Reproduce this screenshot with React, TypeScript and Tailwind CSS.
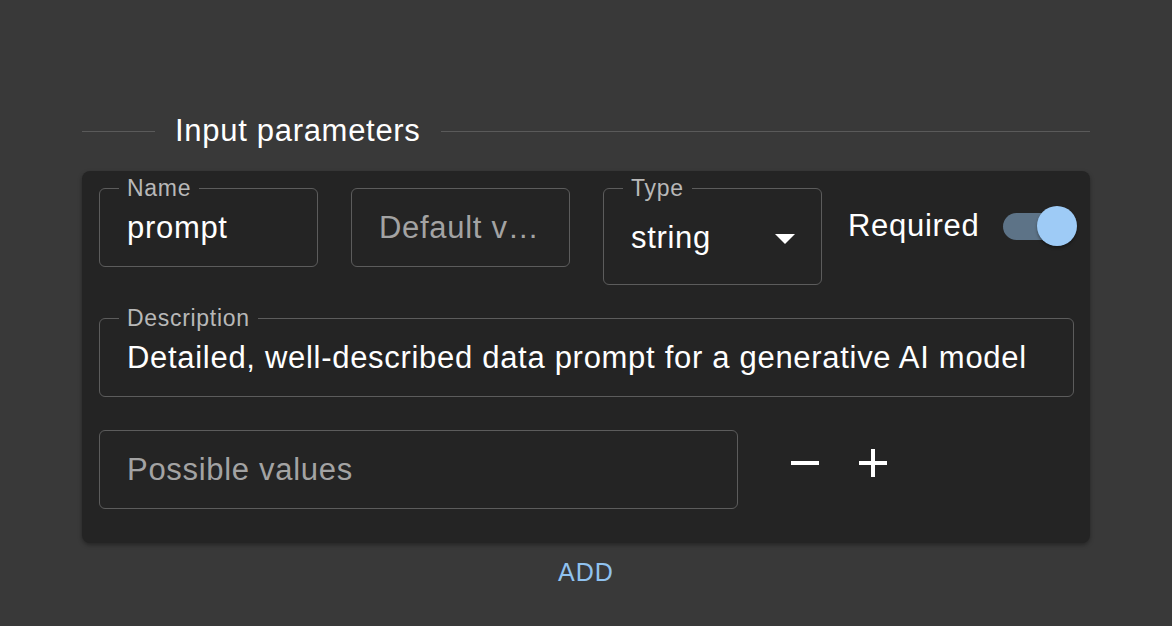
import React from 'react';

const FONT = { fontFamily: '"Liberation Sans", Arial, sans-serif' };

function OutlinedField({
  label,
  value,
  placeholder,
  className = '',
  children,
}: {
  label?: string;
  value?: string;
  placeholder?: string;
  className?: string;
  children?: React.ReactNode;
}) {
  return (
    <div
      className={`relative flex items-center rounded-[6px] border border-[#5c5c5c] pl-[27px] ${className}`}
    >
      {label && (
        <span className="absolute -top-[14px] left-[19px] bg-[#242424] px-[8px] text-[23px] leading-[26px] tracking-[0.7px] text-[#b8b8b8]">
          {label}
        </span>
      )}
      {value ? (
        <span className="whitespace-nowrap text-[31px] leading-[36px] tracking-[0.7px] text-white">{value}</span>
      ) : (
        <span className="whitespace-nowrap text-[31px] leading-[36px] tracking-[0.7px] text-[#a3a3a3]">{placeholder}</span>
      )}
      {children}
    </div>
  );
}

function Toggle() {
  return (
    <div className="relative -mr-[3px] flex h-[40px] w-[74px] items-center">
      <div className="h-[27px] w-[62px] rounded-full bg-[#5d7387]" />
      <div className="absolute right-0 top-0 h-[40px] w-[40px] rounded-full bg-[#9ecbf6] shadow-[0_2px_3px_rgba(0,0,0,0.35)]" />
    </div>
  );
}

export default function App() {
  return (
    <div className="min-h-screen w-full bg-[#393939] px-[82px] pt-[114px]" style={FONT}>
      {/* section heading */}
      <div className="flex h-[34px] items-center">
        <div className="h-px w-[73px] bg-[#5a5a5a]" />
        <span className="px-[20px] text-[31px] leading-[34px] tracking-[0.7px] text-white">Input parameters</span>
        <div className="h-px flex-1 bg-[#5a5a5a]" />
      </div>

      <div className="mt-[23px] rounded-[8px] bg-[#242424] pb-[34px] pl-[17px] pr-[16px] pt-[17px] shadow-[0_2px_4px_rgba(0,0,0,0.35)]">
        <div className="flex items-start">
          <OutlinedField label="Name" value="prompt" className="h-[79px] w-[219px] pr-[20px]" />
          <OutlinedField placeholder="Default v…" className="ml-[33px] h-[79px] w-[219px] pr-[20px]" />
          <OutlinedField label="Type" value="string" className="ml-[33px] h-[97px] w-[219px] justify-between pr-[20px] pt-[2px]">
            <svg width="48" height="48" viewBox="0 0 24 24" className="-mr-[8px] shrink-0 fill-white">
              <path d="M7 10l5 5 5-5z" />
            </svg>
          </OutlinedField>
          <div className="ml-[26px] flex h-[76px] flex-1 items-center justify-between">
            <span className="text-[31px] leading-[36px] tracking-[0.7px] text-white">Required</span>
            <Toggle />
          </div>
        </div>

        <OutlinedField
          label="Description"
          value="Detailed, well-described data prompt for a generative AI model"
          className="mt-[33px] h-[79px] w-full pr-[20px]"
        />

        <div className="mt-[33px] flex items-center">
          <OutlinedField placeholder="Possible values" className="h-[79px] w-[639px] pr-[20px]" />
          <div className="mb-[13px] ml-[43px] flex items-center gap-[20px]">
            <svg width="48" height="48" viewBox="0 0 24 24" className="fill-white">
              <path d="M19 13H5v-2h14v2z" />
            </svg>
            <svg width="48" height="48" viewBox="0 0 24 24" className="fill-white">
              <path d="M19 13h-6v6h-2v-6H5v-2h6V5h2v6h6v2z" />
            </svg>
          </div>
        </div>
      </div>

      <div className="mt-[16px] text-center text-[25px] leading-[26px] tracking-[1px] text-[#90c2ef]">ADD</div>
    </div>
  );
}
